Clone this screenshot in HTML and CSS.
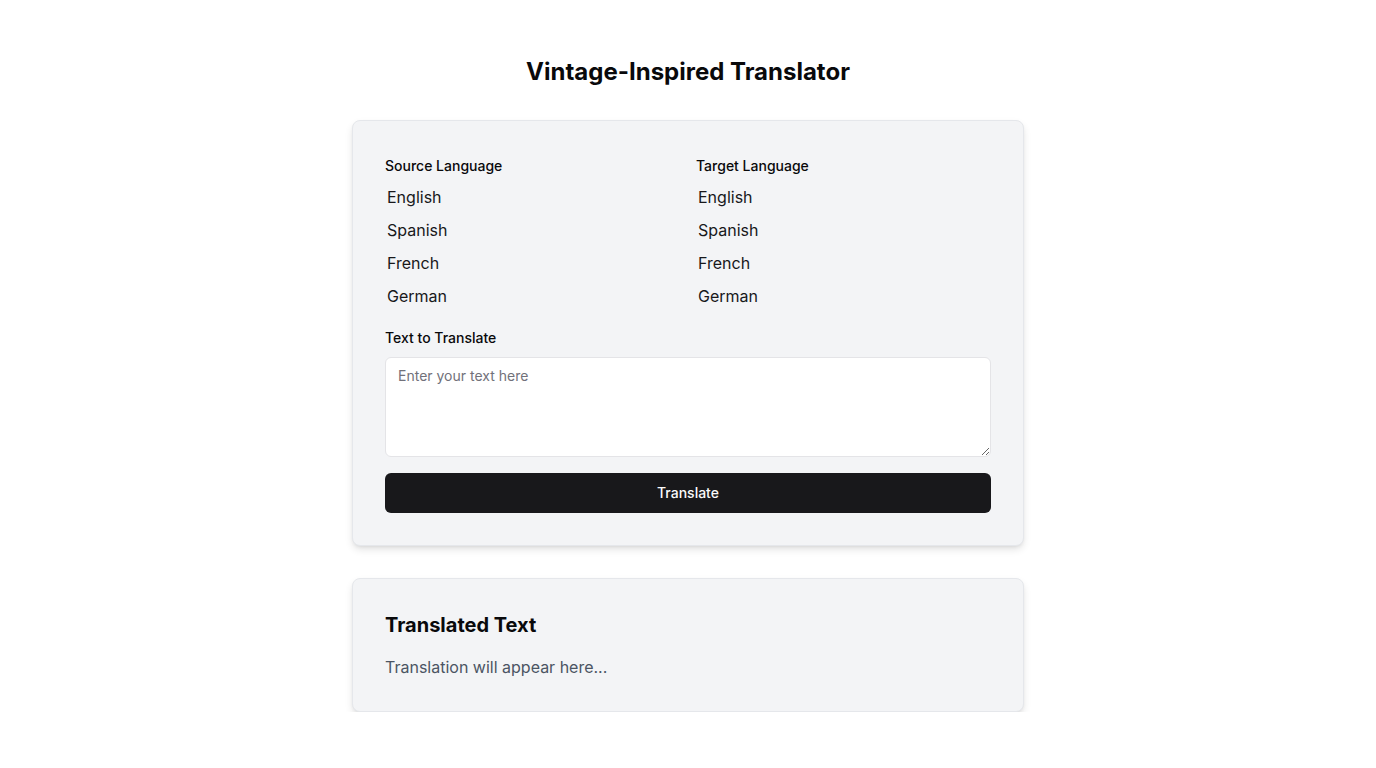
FILE: index.html
```html
<!DOCTYPE html>
<html lang="en">
<head>
<meta charset="utf-8">
<title>Vintage-Inspired Translator</title>
<link rel="stylesheet" href="styles.css">
</head>
<body>
<main class="page">
  <h1 class="title">Vintage-Inspired Translator</h1>
  <section class="card">
    <div class="lang-grid">
      <div class="lang-col">
        <label class="label">Source Language</label>
        <ul class="lang-list">
          <li>English</li>
          <li>Spanish</li>
          <li>French</li>
          <li>German</li>
        </ul>
      </div>
      <div class="lang-col">
        <label class="label">Target Language</label>
        <ul class="lang-list">
          <li>English</li>
          <li>Spanish</li>
          <li>French</li>
          <li>German</li>
        </ul>
      </div>
    </div>
    <label class="label text-label" for="src">Text to Translate</label>
    <textarea id="src" class="textarea" placeholder="Enter your text here"></textarea>
    <button class="btn" type="button">Translate</button>
  </section>
  <section class="card result">
    <h2 class="result-title">Translated Text</h2>
    <p class="result-text">Translation will appear here...</p>
  </section>
</main>
</body>
</html>
```

FILE: styles.css
```css
* { box-sizing: border-box; }
html, body { margin: 0; padding: 0; background: #ffffff; }
body {
  font-family: Inter, "Noto Sans", "Liberation Sans", sans-serif;
  color: #09090b;
}
.page {
  width: 672px;
  margin: 0 auto;
  padding-top: 56px;
  display: flex;
  flex-direction: column;
  gap: 32px;
}
.title {
  margin: 0;
  font-size: 24px;
  line-height: 32px;
  font-weight: 700;
  text-align: center;
  color: #09090b;
}
.card {
  background: #f3f4f6;
  border: 1px solid #e5e7eb;
  border-radius: 8px;
  padding: 32px;
  box-shadow: 0 4px 8px -1px rgba(0,0,0,0.12), 0 2px 4px -2px rgba(0,0,0,0.1);
  display: flex;
  flex-direction: column;
}
.lang-grid {
  display: grid;
  grid-template-columns: 1fr 1fr;
  gap: 16px;
  padding-top: 3px;
}
.label {
  display: block;
  font-size: 14px;
  line-height: 20px;
  font-weight: 500;
  color: #09090b;
}
.lang-list {
  list-style: none;
  margin: 5px 0 0;
  padding: 0;
}
.lang-list li {
  font-size: 16px;
  line-height: 33px;
  height: 33px;
  padding-left: 2px;
  color: #18181b;
}
.text-label {
  margin-top: 15px;
  margin-bottom: 9px;
}
.textarea {
  display: block;
  width: 100%;
  height: 100px;
  border: 1px solid #e4e4e7;
  border-radius: 6px;
  background: #ffffff;
  padding: 8px 12px;
  font-family: inherit;
  font-size: 14px;
  line-height: 20px;
  color: #09090b;
  resize: vertical;
}
.textarea::placeholder { color: #71717a; }
.btn {
  margin-top: 16px;
  height: 40px;
  width: 100%;
  border: none;
  border-radius: 6px;
  background: #18181b;
  color: #fafafa;
  font-family: inherit;
  font-size: 14px;
  font-weight: 500;
  padding: 0 0 2px;
}
.result-title {
  margin: 0;
  font-size: 20px;
  line-height: 28px;
  font-weight: 700;
  color: #09090b;
}
.result-text {
  margin: 16px 0 0;
  font-size: 16px;
  line-height: 24px;
  color: #4b5563;
}
```
